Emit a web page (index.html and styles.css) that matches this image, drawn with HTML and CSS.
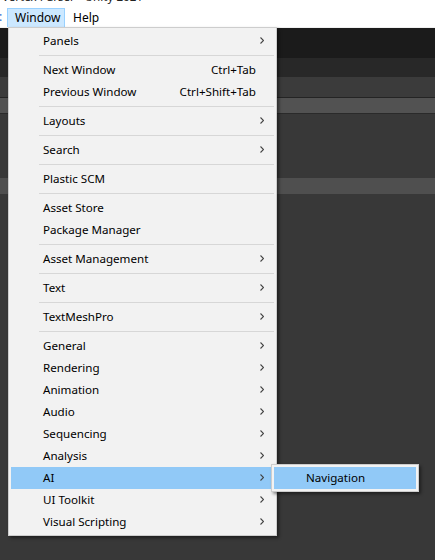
FILE: index.html
```html
<!DOCTYPE html>
<html>
<head>
<meta charset="utf-8">
<link rel="stylesheet" href="styles.css">
</head>
<body>
<div class="top">
  <div class="title"><span>Vertex Parser - Unity 2021</span></div>
  <div class="menubar">
    <span class="edge">:</span>
    <span class="mitem active">Window</span>
    <span class="mitem">Help</span>
  </div>
</div>
<div class="editor">
  <div class="band b1"></div>
  <div class="band b2"></div>
  <div class="band b3"></div>
  <div class="band b4"></div>
  <div class="band b5"></div>
  <div class="band b6"></div>
  <div class="band b7"></div>
</div>

<div class="menu">
  <div class="item"><span class="label">Panels</span><span class="arrow"><svg width="4" height="7" viewBox="0 0 4 7"><path d="M0.5 0.5 L3.5 3.5 L0.5 6.5" /></svg></span></div>
  <div class="sep"></div>
  <div class="item"><span class="label">Next Window</span><span class="short">Ctrl+Tab</span><span class="arrow"></span></div>
  <div class="item"><span class="label">Previous Window</span><span class="short">Ctrl+Shift+Tab</span><span class="arrow"></span></div>
  <div class="sep"></div>
  <div class="item"><span class="label">Layouts</span><span class="arrow"><svg width="4" height="7" viewBox="0 0 4 7"><path d="M0.5 0.5 L3.5 3.5 L0.5 6.5" /></svg></span></div>
  <div class="sep"></div>
  <div class="item"><span class="label">Search</span><span class="arrow"><svg width="4" height="7" viewBox="0 0 4 7"><path d="M0.5 0.5 L3.5 3.5 L0.5 6.5" /></svg></span></div>
  <div class="sep"></div>
  <div class="item"><span class="label">Plastic SCM</span><span class="arrow"></span></div>
  <div class="sep"></div>
  <div class="item"><span class="label">Asset Store</span><span class="arrow"></span></div>
  <div class="item"><span class="label">Package Manager</span><span class="arrow"></span></div>
  <div class="sep"></div>
  <div class="item"><span class="label">Asset Management</span><span class="arrow"><svg width="4" height="7" viewBox="0 0 4 7"><path d="M0.5 0.5 L3.5 3.5 L0.5 6.5" /></svg></span></div>
  <div class="sep"></div>
  <div class="item"><span class="label">Text</span><span class="arrow"><svg width="4" height="7" viewBox="0 0 4 7"><path d="M0.5 0.5 L3.5 3.5 L0.5 6.5" /></svg></span></div>
  <div class="sep"></div>
  <div class="item"><span class="label">TextMeshPro</span><span class="arrow"><svg width="4" height="7" viewBox="0 0 4 7"><path d="M0.5 0.5 L3.5 3.5 L0.5 6.5" /></svg></span></div>
  <div class="sep"></div>
  <div class="item"><span class="label">General</span><span class="arrow"><svg width="4" height="7" viewBox="0 0 4 7"><path d="M0.5 0.5 L3.5 3.5 L0.5 6.5" /></svg></span></div>
  <div class="item"><span class="label">Rendering</span><span class="arrow"><svg width="4" height="7" viewBox="0 0 4 7"><path d="M0.5 0.5 L3.5 3.5 L0.5 6.5" /></svg></span></div>
  <div class="item"><span class="label">Animation</span><span class="arrow"><svg width="4" height="7" viewBox="0 0 4 7"><path d="M0.5 0.5 L3.5 3.5 L0.5 6.5" /></svg></span></div>
  <div class="item"><span class="label">Audio</span><span class="arrow"><svg width="4" height="7" viewBox="0 0 4 7"><path d="M0.5 0.5 L3.5 3.5 L0.5 6.5" /></svg></span></div>
  <div class="item"><span class="label">Sequencing</span><span class="arrow"><svg width="4" height="7" viewBox="0 0 4 7"><path d="M0.5 0.5 L3.5 3.5 L0.5 6.5" /></svg></span></div>
  <div class="item"><span class="label">Analysis</span><span class="arrow"><svg width="4" height="7" viewBox="0 0 4 7"><path d="M0.5 0.5 L3.5 3.5 L0.5 6.5" /></svg></span></div>
  <div class="item hl"><span class="label">AI</span><span class="arrow"><svg width="4" height="7" viewBox="0 0 4 7"><path d="M0.5 0.5 L3.5 3.5 L0.5 6.5" /></svg></span></div>
  <div class="item"><span class="label">UI Toolkit</span><span class="arrow"><svg width="4" height="7" viewBox="0 0 4 7"><path d="M0.5 0.5 L3.5 3.5 L0.5 6.5" /></svg></span></div>
  <div class="item"><span class="label">Visual Scripting</span><span class="arrow"><svg width="4" height="7" viewBox="0 0 4 7"><path d="M0.5 0.5 L3.5 3.5 L0.5 6.5" /></svg></span></div>
</div>

<div class="submenu">
  <div class="item hl sub"><span class="label">Navigation</span></div>
</div>
</body>
</html>
```

FILE: styles.css
```css
* { box-sizing: border-box; }
html, body { margin: 0; padding: 0; }
body {
  width: 435px;
  height: 560px;
  overflow: hidden;
  background: #383838;
  font-family: "Segoe UI", "Noto Sans", "Liberation Sans", sans-serif;
  font-size: 11.6px;
  color: #000;
  position: relative;
}
.top {
  background: #fff;
  height: 28px;
  border-bottom: 1px solid #f0f0f0;
}
.title {
  height: 8px;
  overflow: hidden;
  padding-left: 2px;
}
.title span {
  display: block;
  margin-top: -11px;
  line-height: 16px;
  color: #222;
  white-space: nowrap;
}
.menubar {
  display: flex;
  height: 19px;
  align-items: stretch;
  font-size: 12px;
}
.edge {
  width: 8px;
  color: #1f6fd1;
  line-height: 18px;
  overflow: hidden;
  margin-left: -1px;
}
.mitem {
  padding: 0 7px 0 7px;
  line-height: 18px;
  border: 1px solid transparent;
  border-bottom: none;
}
.mitem.active {
  background: #cce8ff;
  border-color: #99d1ff;
  width: 58px;
}
.editor {
  display: flex;
  flex-direction: column;
}
.band.b1 { height: 30px; background: #1b1b1b; }
.band.b2 { height: 19px; background: #282828; }
.band.b3 { height: 21px; background: #3b3b3b; border-bottom: 1px solid #242424; }
.band.b4 { height: 16px; background: #525252; border-bottom: 1px solid #2a2a2a; }
.band.b5 { height: 64px; background: #383838; }
.band.b6 { height: 16px; background: #4f4f4f; }
.band.b7 { height: 366px; background: #383838; }

.menu {
  position: absolute;
  left: 8px;
  top: 27px;
  width: 269px;
  background: #f2f2f2;
  border: 1px solid #cdcdcd;
  padding: 2px 0 2px 0;
  box-shadow: 2px 2px 3px rgba(0,0,0,0.45);
}
.item {
  display: flex;
  align-items: center;
  height: 22px;
  margin: 0 5px 0 2px;
  padding: 0 7px 1px 32px;
  white-space: nowrap;
}
.item .label { flex: 1; }
.item .short { margin-right: 4px; }
.item .arrow {
  width: 4px;
  height: 7px;
  display: flex;
}
.item .arrow svg path {
  fill: none;
  stroke: #444;
  stroke-width: 1.1;
}
.item.hl { background: #91c9f7; }
.sep {
  height: 1px;
  background: #d7d7d7;
  margin: 3px 2px 3px 30px;
}
.submenu {
  position: absolute;
  left: 271px;
  top: 464px;
  width: 148px;
  height: 28px;
  background: #f2f2f2;
  border: 1px solid #cdcdcd;
  padding: 2px;
  box-shadow: 2px 2px 3px rgba(0,0,0,0.45);
}
.item.sub {
  margin: 0;
  padding-left: 32px;
}
```
